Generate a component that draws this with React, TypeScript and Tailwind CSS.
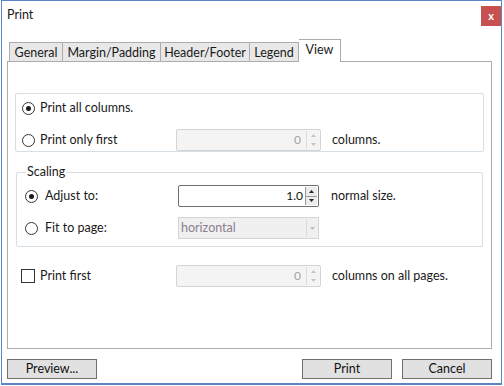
import React from "react"

const font = { fontFamily: "Lato, 'Noto Sans', sans-serif" }

function Radio({ checked }: { checked?: boolean }) {
  return (
    <span className="flex h-[13px] w-[13px] shrink-0 items-center justify-center rounded-full border border-[#333] bg-white">
      {checked ? <span className="h-[5px] w-[5px] rounded-full bg-[#1a1a1a]" /> : null}
    </span>
  )
}

function Arrow({ up, color }: { up?: boolean; color: string }) {
  return (
    <svg width="5" height="3" viewBox="0 0 5 3">
      <path d={up ? "M0 3 L2.5 0 L5 3 Z" : "M0 0 L5 0 L2.5 3 Z"} fill={color} />
    </svg>
  )
}

function Spinner({ value, enabled, w = "w-[145px]" }: { value: string; enabled?: boolean; w?: string }) {
  if (enabled) {
    return (
      <div className={`flex h-[22px] ${w} items-stretch rounded-[2px] border border-[#6f6f6f] bg-white`}>
        <div className="flex flex-1 items-center justify-end pr-[2px] text-[12px] text-[#111]">{value}</div>
        <div className="my-[1px] mr-[1px] flex w-[12px] flex-col border-l border-[#9a9a9a]">
          <div className="flex flex-1 items-center justify-center border-b border-[#9a9a9a] bg-[#ececec]">
            <Arrow up color="#222" />
          </div>
          <div className="flex flex-1 items-center justify-center bg-[#ececec]">
            <Arrow color="#222" />
          </div>
        </div>
      </div>
    )
  }
  return (
    <div className={`flex h-[22px] ${w} items-stretch rounded-[2px] border border-[#d4d4d4] bg-[#f4f4f4]`}>
      <div className="flex flex-1 items-center justify-end pr-[5px] text-[12px] text-[#a3a3a3]">{value}</div>
      <div className="my-[1px] mr-[1px] flex w-[13px] flex-col border-l border-[#dedede]">
        <div className="flex flex-1 items-center justify-center">
          <Arrow up color="#c4c4c4" />
        </div>
        <div className="flex flex-1 items-center justify-center">
          <Arrow color="#c4c4c4" />
        </div>
      </div>
    </div>
  )
}

function Tab({ label, w, active, first }: { label: string; w: string; active?: boolean; first?: boolean }) {
  return (
    <div
      className={`${w} flex items-center justify-center border-t border-r border-[#acacac] text-[12.5px] ${
        first ? "border-l" : ""
      } ${active ? "relative z-10 h-[23px] bg-white pb-[2px] text-[#1a1a1a]" : "h-[20px] bg-[#e8e8e8] pt-[1px] text-[#1a1a1a]"}`}
    >
      {label}
    </div>
  )
}

function Button({ label }: { label: string }) {
  return (
    <div className="flex h-[20px] w-[90px] items-center justify-center border border-[#707070] bg-[#e1e1e1] text-[12.5px] text-[#111]">
      {label}
    </div>
  )
}

export default function App() {
  return (
    <div className="h-[386px] w-[504px] bg-white" style={font}>
      <div className="ml-[1px] flex h-[385px] w-[501px] flex-col border-x border-t border-b-2 border-[#5a86c6] bg-white">
        <div className="flex h-[30px] items-start justify-between">
          <span className="pl-[5px] pt-[5px] text-[12.5px] text-[#1a1a1a]">Print</span>
          <div className="mt-[5px] flex h-[20px] w-[20px] items-center justify-center bg-[#c75050] text-[11px] font-bold text-white">
            x
          </div>
        </div>

        <div className="mt-[8px] flex items-end pl-[7px]">
          <Tab label="General" w="w-[54px]" first />
          <Tab label="Margin/Padding" w="w-[98px]" />
          <Tab label="Header/Footer" w="w-[89px]" />
          <Tab label="Legend" w="w-[49px]" />
          <Tab label="View" w="w-[42px]" active />
        </div>

        <div className="-mt-px ml-[5px] h-[288px] w-[485px] border border-[#acacac] bg-white text-[12.5px] text-[#1a1a1a]">
          <div className="mx-[7px] mt-[31px] h-[59px] rounded-[2px] border border-[#d5dfe5] pl-[6px]">
            <div className="mt-[7px] flex h-[14px] items-center gap-[5px]">
              <Radio checked />
              <span>Print all columns.</span>
            </div>
            <div className="mt-[14px] flex items-center">
              <div className="flex w-[154px] items-center gap-[5px]">
                <Radio />
                <span>Print only first</span>
              </div>
              <Spinner value="0" />
              <span className="ml-[11px]">columns.</span>
            </div>
          </div>

          <fieldset className="mx-[8px] mt-[13px] h-[82px] rounded-[2px] border border-[#d5dfe5] pl-[8px]">
            <legend className="ml-[1px] px-[1px] leading-[14px]">Scaling</legend>
            <div className="mt-[6px] flex items-center">
              <div className="flex w-[153px] items-center gap-[7px]">
                <Radio checked />
                <span>Adjust to:</span>
              </div>
              <Spinner value="1.0" enabled w="w-[141px]" />
              <span className="ml-[12px]">normal size.</span>
            </div>
            <div className="mt-[10px] flex items-center">
              <div className="flex w-[153px] items-center gap-[7px]">
                <Radio />
                <span>Fit to page:</span>
              </div>
              <div className="flex h-[22px] w-[141px] items-stretch border border-[#d4d4d4] bg-[#f0f0f0]">
                <div className="flex flex-1 items-center pl-[2px] text-[#8a7f8f]">horizontal</div>
                <div className="my-[1px] flex w-[12px] items-center justify-center border-l border-[#dcdcdc]">
                  <Arrow color="#bdbdbd" />
                </div>
              </div>
            </div>
          </fieldset>

          <div className="mt-[18px] flex items-center pl-[13px]">
            <div className="flex w-[155px] items-center gap-[5px]">
              <span className="h-[14px] w-[14px] border border-[#333] bg-white" />
              <span>Print first</span>
            </div>
            <Spinner value="0" />
            <span className="ml-[11px]">columns on all pages.</span>
          </div>
        </div>

        <div className="mt-[10px] flex items-center pl-[5px] pr-[9px]">
          <Button label="Preview..." />
          <div className="flex-1" />
          <Button label="Print" />
          <div className="w-[10px]" />
          <Button label="Cancel" />
        </div>
      </div>
    </div>
  )
}
